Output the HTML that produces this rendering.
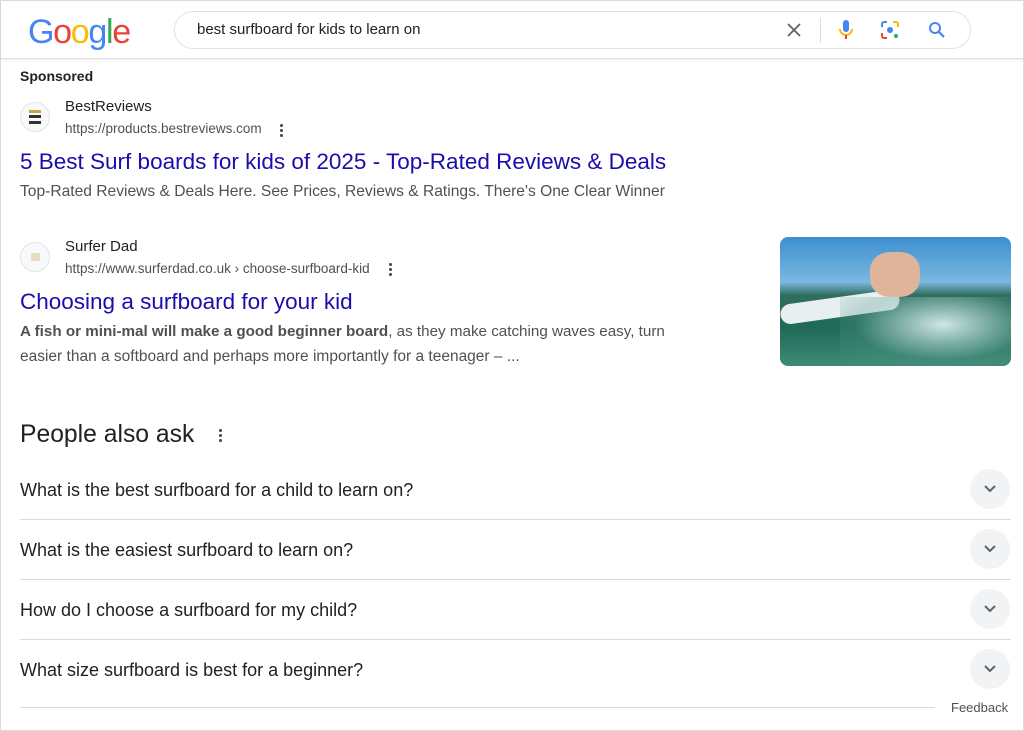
<!DOCTYPE html>
<html><head><meta charset="utf-8"><style>
*{margin:0;padding:0;box-sizing:border-box}
body{width:1024px;height:731px;background:#fff;font-family:"Liberation Sans",Arial,sans-serif;position:relative;overflow:hidden;border:1px solid #dadce0}
.a{position:absolute;white-space:nowrap}
.hdr{position:absolute;left:0;top:0;width:1024px;height:58px;border-bottom:1px solid #e0e0e0;box-shadow:0 1px 3px rgba(0,0,0,.08)}
.logo{font-size:34px;letter-spacing:-1.3px;left:27px;top:12px}
.sb{left:173px;top:10px;width:797px;height:38px;border:1px solid #dfe1e5;border-radius:20px}
.t{color:#202124}
.u{font-size:13.5px;color:#4d5156}
.h3{font-size:22.5px;color:#1a0dab}
.s{font-size:15.8px;color:#4d5156}
.fav{width:30px;height:30px;border-radius:50%;border:1px solid #e3e3e3;background:#f8f9fa}
.q{font-size:18px;color:#202124;left:19px}
.chev{width:40px;height:40px;border-radius:50%;background:#f1f3f4;left:969px}
.ln{left:19px;width:991px;height:1px;background:#dadce0}
.dots{width:3px;height:3px;background:#444;border-radius:50%;position:absolute}
</style></head><body>
<div class="hdr"></div>
<div class="a logo"><span style="color:#4285f4">G</span><span style="color:#ea4335">o</span><span style="color:#fbbc05">o</span><span style="color:#4285f4">g</span><span style="color:#34a853">l</span><span style="color:#ea4335">e</span></div>
<div class="a sb"></div>
<div class="a t" style="left:196px;top:20px;font-size:15px">best surfboard for kids to learn on</div>
<svg class="a" style="left:785px;top:21px" width="16" height="16" viewBox="0 0 16 16"><path d="M2 2L14 14M14 2L2 14" stroke="#5f6368" stroke-width="1.8"/></svg>
<div class="a" style="left:819px;top:17px;width:1px;height:25px;background:#dadce0"></div>
<svg class="a" style="left:836px;top:18px" width="18" height="22" viewBox="0 0 18 22"><rect x="6" y="1" width="6" height="12" rx="3" fill="#4285f4"/><path d="M3 10a6 6 0 0 0 12 0" stroke="#fbbc05" stroke-width="2" fill="none"/><path d="M9 16v4" stroke="#ea4335" stroke-width="2"/></svg>
<svg class="a" style="left:879px;top:19px" width="20" height="20" viewBox="0 0 20 20"><path d="M2 7V4a2 2 0 0 1 2-2h3" stroke="#4285f4" stroke-width="2" fill="none"/><path d="M13 2h3a2 2 0 0 1 2 2v3" stroke="#fbbc05" stroke-width="2" fill="none"/><path d="M2 13v3a2 2 0 0 0 2 2h3" stroke="#ea4335" stroke-width="2" fill="none"/><circle cx="10" cy="10" r="3" fill="#4285f4"/><circle cx="16" cy="16" r="2" fill="#34a853"/></svg>
<svg class="a" style="left:927px;top:20px" width="18" height="18" viewBox="0 0 18 18"><circle cx="7" cy="7" r="5" stroke="#4285f4" stroke-width="2" fill="none"/><path d="M11 11l5 5" stroke="#4285f4" stroke-width="2.2"/></svg>

<div class="a t" style="left:19px;top:67px;font-size:14px;font-weight:bold">Sponsored</div>
<div class="a fav" style="left:19px;top:101px"><div class="a" style="left:8px;top:7px;width:12px;height:3px;background:#c9a44a"></div><div class="a" style="left:8px;top:12px;width:12px;height:3px;background:#333"></div><div class="a" style="left:8px;top:18px;width:12px;height:3px;background:#333"></div></div>
<div class="a t" style="left:64px;top:97px;font-size:15px">BestReviews</div>
<div class="a u" style="left:64px;top:120px">https://products.bestreviews.com</div>
<div class="dots" style="left:279px;top:123px"></div><div class="dots" style="left:279px;top:128px"></div><div class="dots" style="left:279px;top:133px"></div>
<div class="a h3" style="left:19px;top:148px">5 Best Surf boards for kids of 2025 - Top-Rated Reviews &amp; Deals</div>
<div class="a s" style="left:19px;top:182px;font-size:15.6px">Top-Rated Reviews &amp; Deals Here. See Prices, Reviews &amp; Ratings. There's One Clear Winner</div>

<div class="a fav" style="left:19px;top:241px"><div class="a" style="left:10px;top:10px;width:9px;height:8px;background:#e8dcc0"></div></div>
<div class="a t" style="left:64px;top:237px;font-size:15px">Surfer Dad</div>
<div class="a u" style="left:64px;top:260px">https://www.surferdad.co.uk › choose-surfboard-kid</div>
<div class="dots" style="left:388px;top:262px"></div><div class="dots" style="left:388px;top:267px"></div><div class="dots" style="left:388px;top:272px"></div>
<div class="a h3" style="left:19px;top:288px">Choosing a surfboard for your kid</div>
<div class="a s" style="left:19px;top:322px;font-size:15.2px"><b>A fish or mini-mal will make a good beginner board</b>, as they make catching waves easy, turn</div>
<div class="a s" style="left:19px;top:347px;font-size:15.5px">easier than a softboard and perhaps more importantly for a teenager – ...</div>
<div class="a" style="left:779px;top:236px;width:231px;height:129px;border-radius:8px;overflow:hidden;background:linear-gradient(180deg,#3d8fd0 0%,#7ab8e0 35%,#2f6e5e 45%,#1f6a58 70%,#3f8a75 100%)">
<div class="a" style="left:0;top:60px;width:120px;height:20px;background:#e8efef;transform:rotate(-8deg);border-radius:10px"></div>
<div class="a" style="left:60px;top:60px;width:171px;height:69px;background:radial-gradient(ellipse at 60% 40%,#cfe6e6,rgba(80,150,140,.3) 60%,transparent)"></div>
<div class="a" style="left:90px;top:15px;width:50px;height:45px;background:#e0b49a;border-radius:40%"></div>
</div>

<div class="a t" style="left:19px;top:420px;font-size:24.7px">People also ask</div>
<div class="dots" style="left:218px;top:428px"></div><div class="dots" style="left:218px;top:433px"></div><div class="dots" style="left:218px;top:438px"></div>

<div class="a q" style="top:479px">What is the best surfboard for a child to learn on?</div>
<div class="a chev" style="top:468px"></div>
<div class="a ln" style="top:518px"></div>
<div class="a q" style="top:539px">What is the easiest surfboard to learn on?</div>
<div class="a chev" style="top:528px"></div>
<div class="a ln" style="top:578px"></div>
<div class="a q" style="top:599px">How do I choose a surfboard for my child?</div>
<div class="a chev" style="top:588px"></div>
<div class="a ln" style="top:638px"></div>
<div class="a q" style="top:659px">What size surfboard is best for a beginner?</div>
<div class="a chev" style="top:648px"></div>
<svg class="a" style="left:982px;top:483px" width="14" height="10"><path d="M2 2l5 5 5-5" stroke="#5f6368" stroke-width="2" fill="none"/></svg>
<svg class="a" style="left:982px;top:543px" width="14" height="10"><path d="M2 2l5 5 5-5" stroke="#5f6368" stroke-width="2" fill="none"/></svg>
<svg class="a" style="left:982px;top:603px" width="14" height="10"><path d="M2 2l5 5 5-5" stroke="#5f6368" stroke-width="2" fill="none"/></svg>
<svg class="a" style="left:982px;top:663px" width="14" height="10"><path d="M2 2l5 5 5-5" stroke="#5f6368" stroke-width="2" fill="none"/></svg>
<div class="a" style="left:19px;top:706px;width:915px;height:1px;background:#dadce0"></div>
<div class="a" style="left:950px;top:699px;font-size:13px;color:#4d5156">Feedback</div>
</body></html>
